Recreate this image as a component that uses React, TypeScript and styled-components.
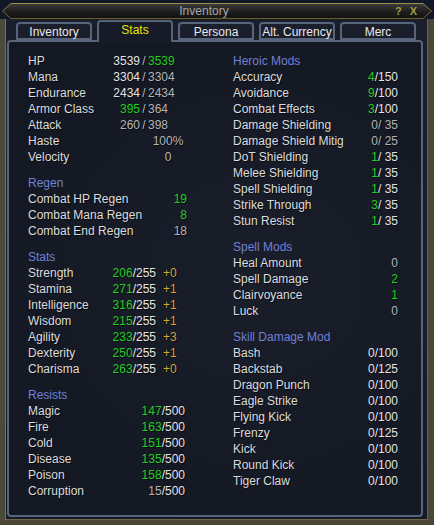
import styled, { createGlobalStyle } from "styled-components";

type Tone = "label" | "white" | "gray" | "green" | "gold";
type Align = "left" | "right" | "center";
type Seg = [string, Tone];

type StatRow = {
  label: string;
  cells: Seg[][];
  cols?: string;
  aligns?: Align[];
};

type Section = {
  title?: string;
  cols: string;
  aligns: Align[];
  rows: StatRow[];
};

const toneColor: Record<Tone, string> = {
  label: "#dcdcdc",
  white: "#e4e4e4",
  gray: "#b4b4b4",
  green: "#1fd11f",
  gold: "#cfa232",
};

const GlobalStyle = createGlobalStyle`
  html, body {
    margin: 0;
    padding: 0;
    background: #0d1422;
  }
  body {
    font-family: "Liberation Sans", Arial, sans-serif;
    font-size: 12px;
  }
`;

const Window = styled.div`
  width: 434px;
  height: 525px;
  display: flex;
  flex-direction: column;
  background: #111827;
  overflow: hidden;
`;

const TitleEdge = styled.div`
  height: 16px;
  margin: 3px 2px 0 2px;
  padding: 1px;
  box-sizing: border-box;
  background: linear-gradient(#a08c4c, #6c5c2c);
  clip-path: polygon(9px 0, calc(100% - 9px) 0, 100% 50%, calc(100% - 9px) 100%, 9px 100%, 0 50%);
`;

const TitleBar = styled.div`
  height: 100%;
  display: flex;
  align-items: center;
  padding-left: 10px;
  background: linear-gradient(#3a3a38, #1c1c1c 60%, #121212);
  clip-path: polygon(8px 0, calc(100% - 8px) 0, 100% 50%, calc(100% - 8px) 100%, 8px 100%, 0 50%);
`;

const Title = styled.div`
  flex: 1;
  text-align: center;
  color: #a6a6a6;
  font-size: 12px;
  line-height: 14px;
`;

const TitleButtons = styled.div`
  display: flex;
  gap: 8px;
  padding-right: 14px;
  color: #a29c44;
  font-size: 11px;
  font-weight: bold;
  line-height: 14px;
`;

const Frame = styled.div`
  flex: 1;
  display: flex;
  flex-direction: column;
  min-height: 0;
  padding: 1px 5px 3px 2px;
  background: linear-gradient(#1a1e2b, #161a25);
  border-left: 5px solid #4b4a38;
  border-right: 6px solid #4a4736;
  border-bottom: 5px solid #4a4832;
  box-shadow: inset 1px 0 0 #777055, inset -1px 0 0 #6d6548, inset 0 -1px 0 #6d6548;
`;

const TabStrip = styled.div`
  display: flex;
  align-items: flex-end;
  gap: 5px;
  height: 20px;
  padding-left: 9px;
`;

const Tab = styled.div<{ $active?: boolean }>`
  position: relative;
  z-index: ${(p) => (p.$active ? 1 : 0)};
  width: 76px;
  height: ${(p) => (p.$active ? "22px" : "18px")};
  margin-bottom: ${(p) => (p.$active ? "-2px" : "0")};
  box-sizing: border-box;
  padding-top: ${(p) => (p.$active ? "1px" : "1px")};
  border: 2px solid #58637c;
  border-bottom: ${(p) => (p.$active ? "none" : "2px solid #58637c")};
  border-radius: 4px 4px 0 0;
  background: ${(p) => (p.$active ? "#171b27" : "#1b1f2c")};
  color: ${(p) => (p.$active ? "#e6e600" : "#e8e8e8")};
  text-align: center;
  font-size: 12px;
  line-height: ${(p) => (p.$active ? "15px" : "14px")};
  white-space: nowrap;
`;

const Panel = styled.div`
  flex: 1;
  display: grid;
  grid-template-columns: 205px 1fr;
  align-content: start;
  padding: 11px 0 0 19px;
  border: 2px solid #58637c;
  border-radius: 4px;
  background: radial-gradient(ellipse at 60% 50%, #1a1e2a, #141823 80%);
`;

const Column = styled.div`
  display: flex;
  flex-direction: column;
  gap: 10px;
`;

const Block = styled.div`
  display: flex;
  flex-direction: column;
`;

const Heading = styled.div`
  height: 16px;
  line-height: 16px;
  color: #6f80d6;
`;

const Row = styled.div<{ $cols: string }>`
  display: grid;
  grid-template-columns: ${(p) => p.$cols};
  height: 16px;
  line-height: 16px;
  white-space: pre;
  text-shadow: 1px 1px 0 rgba(0, 0, 0, 0.6);
`;

const Cell = styled.span<{ $align: Align }>`
  text-align: ${(p) => p.$align};
  color: ${toneColor.label};
`;

const Seg = styled.span<{ $tone: Tone }>`
  color: ${(p) => toneColor[p.$tone]};
`;

const s = (text: string, tone: Tone = "gray"): Seg => [text, tone];
const one = (text: string, tone: Tone = "gray"): Seg[][] => [[s(text, tone)]];

const left: Section[] = [
  {
    cols: "84px 28px 8px auto",
    aligns: ["right", "center", "left"],
    rows: [
      { label: "HP", cells: [[s("3539", "white")], [s("/")], [s("3539", "green")]] },
      { label: "Mana", cells: [[s("3304", "white")], [s("/")], [s("3304")]] },
      { label: "Endurance", cells: [[s("2434", "white")], [s("/")], [s("2434")]] },
      { label: "Armor Class", cells: [[s("395", "green")], [s("/")], [s("364")]] },
      { label: "Attack", cells: [[s("260")], [s("/")], [s("398")]] },
      { label: "Haste", cols: "120px 40px", aligns: ["center"], cells: one("100%") },
      { label: "Velocity", cols: "120px 40px", aligns: ["center"], cells: one("0") },
    ],
  },
  {
    title: "Regen",
    cols: "120px 39px",
    aligns: ["right"],
    rows: [
      { label: "Combat HP Regen", cells: one("19", "green") },
      { label: "Combat Mana Regen", cells: one("8", "green") },
      { label: "Combat End Regen", cells: one("18") },
    ],
  },
  {
    title: "Stats",
    cols: "72px 56px 7px auto",
    aligns: ["right", "left"],
    rows: [
      ["Strength", "206", "+0"],
      ["Stamina", "271", "+1"],
      ["Intelligence", "316", "+1"],
      ["Wisdom", "215", "+1"],
      ["Agility", "233", "+3"],
      ["Dexterity", "250", "+1"],
      ["Charisma", "263", "+0"],
    ].map(([label, value, bonus]) => ({
      label,
      cells: [[s(value, "green"), s("/255", "white")], [], [s(bonus, "gold")]],
    })),
  },
  {
    title: "Resists",
    cols: "110px 47px",
    aligns: ["right"],
    rows: [
      ["Magic", "147"],
      ["Fire", "163"],
      ["Cold", "151"],
      ["Disease", "135"],
      ["Poison", "158"],
      ["Corruption", "15"],
    ].map(([label, value]) => ({
      label,
      cells: [[s(value, label === "Corruption" ? "gray" : "green"), s("/500", "white")]],
    })),
  },
];

const heroic: [string, string, string][] = [
  ["Accuracy", "4", "/150"],
  ["Avoidance", "9", "/100"],
  ["Combat Effects", "3", "/100"],
  ["Damage Shielding", "0", "/ 35"],
  ["Damage Shield Mitig", "0", "/ 25"],
  ["DoT Shielding", "1", "/ 35"],
  ["Melee Shielding", "1", "/ 35"],
  ["Spell Shielding", "1", "/ 35"],
  ["Strike Through", "3", "/ 35"],
  ["Stun Resist", "1", "/ 35"],
];

const skills: [string, string][] = [
  ["Bash", "100"],
  ["Backstab", "125"],
  ["Dragon Punch", "100"],
  ["Eagle Strike", "100"],
  ["Flying Kick", "100"],
  ["Frenzy", "125"],
  ["Kick", "100"],
  ["Round Kick", "100"],
  ["Tiger Claw", "100"],
];

const right: Section[] = [
  {
    title: "Heroic Mods",
    cols: "130px 35px",
    aligns: ["right"],
    rows: heroic.map(([label, value, max]) => ({
      label,
      cells: [[s(value, value === "0" ? "gray" : "green"), s(max, value === "0" ? "gray" : "white")]],
    })),
  },
  {
    title: "Spell Mods",
    cols: "130px 35px",
    aligns: ["right"],
    rows: [
      { label: "Heal Amount", cells: one("0") },
      { label: "Spell Damage", cells: one("2", "green") },
      { label: "Clairvoyance", cells: one("1", "green") },
      { label: "Luck", cells: one("0") },
    ],
  },
  {
    title: "Skill Damage Mod",
    cols: "130px 35px",
    aligns: ["right"],
    rows: skills.map(([label, max]) => ({
      label,
      cells: [[s("0/" + max, "white")]],
    })),
  },
];

const tabs = ["Inventory", "Stats", "Persona", "Alt. Currency", "Merc"];

const StatBlock = ({ section }: { section: Section }) => (
  <Block>
    {section.title && <Heading>{section.title}</Heading>}
    {section.rows.map((row) => {
      const aligns = row.aligns ?? section.aligns;
      return (
        <Row key={row.label} $cols={row.cols ?? section.cols}>
          <Cell $align="left">{row.label}</Cell>
          {row.cells.map((cell, i) => (
            <Cell key={i} $align={aligns[i] ?? "left"}>
              {cell.map(([text, tone], j) => (
                <Seg key={j} $tone={tone}>
                  {text}
                </Seg>
              ))}
            </Cell>
          ))}
        </Row>
      );
    })}
  </Block>
);

export default function App() {
  return (
    <>
      <GlobalStyle />
      <Window>
        <TitleEdge>
          <TitleBar>
            <Title>Inventory</Title>
            <TitleButtons>
              <span>?</span>
              <span>X</span>
            </TitleButtons>
          </TitleBar>
        </TitleEdge>
        <Frame>
          <TabStrip>
            {tabs.map((t) => (
              <Tab key={t} $active={t === "Stats"}>
                {t}
              </Tab>
            ))}
          </TabStrip>
          <Panel>
            <Column>
              {left.map((sec, i) => (
                <StatBlock key={i} section={sec} />
              ))}
            </Column>
            <Column>
              {right.map((sec, i) => (
                <StatBlock key={i} section={sec} />
              ))}
            </Column>
          </Panel>
        </Frame>
      </Window>
    </>
  );
}
